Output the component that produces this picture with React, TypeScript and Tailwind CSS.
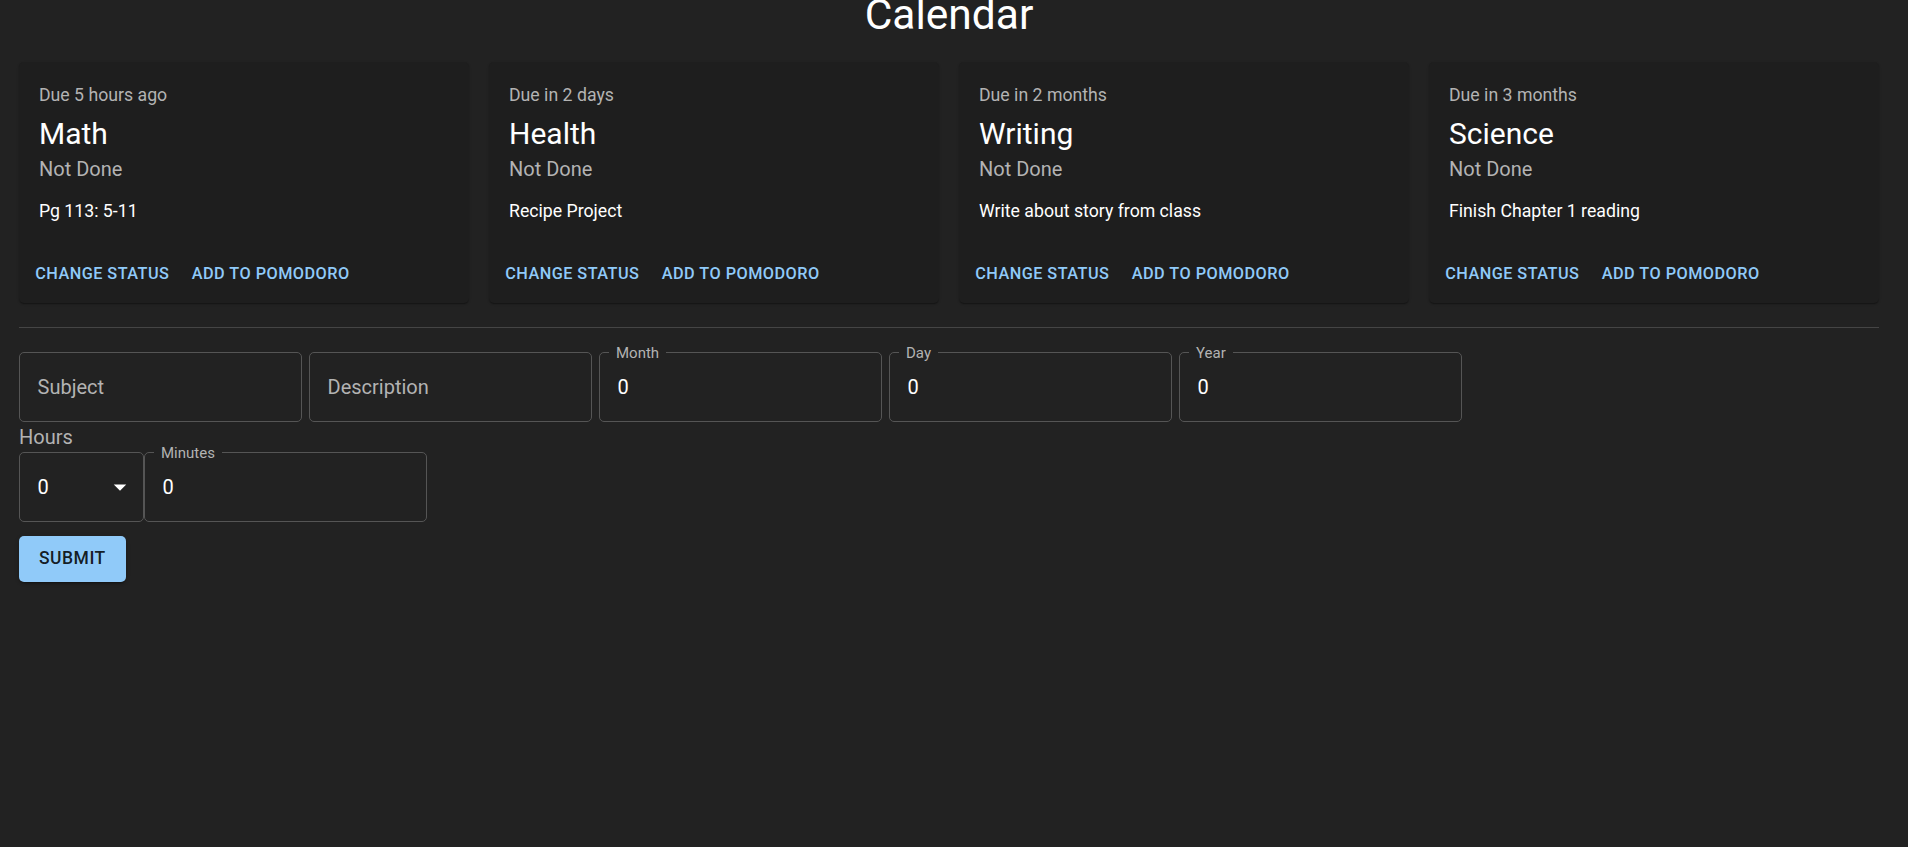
type Task = {
  due: string;
  subject: string;
  status: string;
  description: string;
};

const tasks: Task[] = [
  { due: "Due 5 hours ago", subject: "Math", status: "Not Done", description: "Pg 113: 5-11" },
  { due: "Due in 2 days", subject: "Health", status: "Not Done", description: "Recipe Project" },
  { due: "Due in 2 months", subject: "Writing", status: "Not Done", description: "Write about story from class" },
  { due: "Due in 3 months", subject: "Science", status: "Not Done", description: "Finish Chapter 1 reading" },
];

function TaskCard({ task }: { task: Task }) {
  return (
    <div className="rounded-[5px] bg-[#1e1e1e] shadow-[0_2px_1px_-1px_rgba(0,0,0,0.2),0_1px_1px_0_rgba(0,0,0,0.14),0_1px_3px_0_rgba(0,0,0,0.12)]">
      <div className="px-[20px] pt-[21px] pb-[20px]">
        <p className="text-[17.7px] leading-[25px] mb-[6px] text-[#b3b3b3]">{task.due}</p>
        <h5 className="text-[30px] leading-[40px] text-white">{task.subject}</h5>
        <p className="text-[20px] leading-[30px] mb-[15px] text-[#b3b3b3]">{task.status}</p>
        <p className="text-[17.7px] leading-[25px] text-white">{task.description}</p>
      </div>
      <div className="flex items-center px-[10px] pt-[11px] pb-[10px] gap-[10px]">
        {["Change Status", "Add to Pomodoro"].map((label) => (
          <button
            key={label}
            className="px-[6.25px] py-[5px] rounded-[5px] text-[16.25px] leading-[28.4px] font-medium uppercase tracking-[0.02857em] text-[#90caf9]"
          >
            {label}
          </button>
        ))}
      </div>
    </div>
  );
}

// outlined field, label sits in the border notch when it has a value
function Field({ label, value, width = "w-[283px]" }: { label: string; value?: string; width?: string }) {
  return (
    <div className={`relative ${width} h-[70px] rounded-[5px] border border-[#555] flex items-center px-[17.5px]`}>
      {value === undefined ? (
        <span className="text-[20px] text-[#b3b3b3]">{label}</span>
      ) : (
        <>
          <span className="absolute left-[9px] top-0 -translate-y-1/2 px-[7px] bg-[#222222] text-[15px] leading-[15px] text-[#b3b3b3]">
            {label}
          </span>
          <span className="text-[20px] text-white">{value}</span>
        </>
      )}
    </div>
  );
}

export default function App() {
  return (
    <div className="min-h-screen bg-[#222222] font-['Roboto',sans-serif] pl-[19px] pr-[29px] overflow-hidden">
      <h4 className="-mt-[11px] mb-[20px] text-center text-[42.5px] leading-[52.5px] text-white">Calendar</h4>

      <div className="grid grid-cols-4 gap-[20px]">
        {tasks.map((t) => (
          <TaskCard key={t.subject} task={t} />
        ))}
      </div>

      <hr className="mt-[24px] mb-[24px] border-0 border-t border-[#454545]" />

      <div className="flex gap-[7px]">
        <Field label="Subject" />
        <Field label="Description" />
        <Field label="Month" value="0" />
        <Field label="Day" value="0" />
        <Field label="Year" value="0" />
      </div>

      <label className="block pt-[1px] text-[20px] leading-[29px] text-[#b3b3b3]">Hours</label>
      <div className="flex">
        <div className="w-[125px] h-[70px] rounded-[5px] border border-[#555] flex items-center justify-between pl-[17.5px] pr-[8px]">
          <span className="text-[20px] text-white">0</span>
          <svg width="30" height="30" viewBox="0 0 24 24" fill="white">
            <path d="M7 10l5 5 5-5z" />
          </svg>
        </div>
        <Field label="Minutes" value="0" />
      </div>

      <button className="mt-[14px] px-[20px] py-[7.5px] rounded-[5px] bg-[#90caf9] text-[17.5px] leading-[30.6px] font-medium uppercase tracking-[0.02857em] text-[rgba(0,0,0,0.87)] shadow-[0_3px_1px_-2px_rgba(0,0,0,0.2),0_2px_2px_0_rgba(0,0,0,0.14),0_1px_5px_0_rgba(0,0,0,0.12)]">
        Submit
      </button>
    </div>
  );
}
